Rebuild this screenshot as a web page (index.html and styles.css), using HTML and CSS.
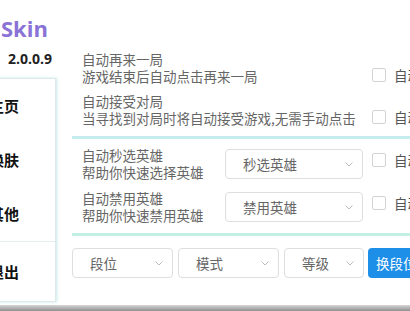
FILE: index.html
```html
<!DOCTYPE html>
<html lang="zh-CN">
<head>
    <meta charset="UTF-8">
    <meta name="viewport" content="width=device-width, initial-scale=1.0">
    <title>Skin</title>
    <link rel="stylesheet" href="styles.css">
</head>
<body>
    <div class="window">
        <div class="side">
            <div class="brand">Skin</div>
            <div class="version">2.0.0.9</div>
            <div class="nav">
                <div class="navItem">主页</div>
                <div class="navItem">换肤</div>
                <div class="navItem">其他</div>
                <div class="navItem navLast">退出</div>
            </div>
        </div>

        <div class="main">
            <div class="group groupTop">
                <div class="row">
                    <div class="desc wide">
                        <div class="title">自动再来一局</div>
                        <div class="sub">游戏结束后自动点击再来一局</div>
                    </div>
                    <label class="check"><span class="box"></span>自动再来一局</label>
                </div>
                <div class="row">
                    <div class="desc wide">
                        <div class="title">自动接受对局</div>
                        <div class="sub">当寻找到对局时将自动接受游戏,无需手动点击</div>
                    </div>
                    <label class="check"><span class="box"></span>自动接受对局</label>
                </div>
            </div>
            <div class="divider"></div>

            <div class="group groupMid">
                <div class="row">
                    <div class="desc">
                        <div class="title">自动秒选英雄</div>
                        <div class="sub">帮助你快速选择英雄</div>
                    </div>
                    <div class="select heroSelect">秒选英雄
                        <svg class="arrow" width="8" height="5" viewBox="0 0 8 5"><polyline points="0.5,0.5 4,4 7.5,0.5" fill="none" stroke="#bbb" stroke-width="1"/></svg>
                    </div>
                    <label class="check"><span class="box"></span>自动秒选</label>
                </div>
                <div class="row">
                    <div class="desc">
                        <div class="title">自动禁用英雄</div>
                        <div class="sub">帮助你快速禁用英雄</div>
                    </div>
                    <div class="select heroSelect">禁用英雄
                        <svg class="arrow" width="8" height="5" viewBox="0 0 8 5"><polyline points="0.5,0.5 4,4 7.5,0.5" fill="none" stroke="#bbb" stroke-width="1"/></svg>
                    </div>
                    <label class="check"><span class="box"></span>自动禁用</label>
                </div>
            </div>
            <div class="divider divider2"></div>

            <div class="rankRow">
                <div class="select rankSelect">段位
                    <svg class="arrow" width="8" height="5" viewBox="0 0 8 5"><polyline points="0.5,0.5 4,4 7.5,0.5" fill="none" stroke="#bbb" stroke-width="1"/></svg>
                </div>
                <div class="select rankSelect">模式
                    <svg class="arrow" width="8" height="5" viewBox="0 0 8 5"><polyline points="0.5,0.5 4,4 7.5,0.5" fill="none" stroke="#bbb" stroke-width="1"/></svg>
                </div>
                <div class="select levelSelect">等级
                    <svg class="arrow" width="8" height="5" viewBox="0 0 8 5"><polyline points="0.5,0.5 4,4 7.5,0.5" fill="none" stroke="#bbb" stroke-width="1"/></svg>
                </div>
                <button class="btnRank">换段位</button>
            </div>
        </div>
    </div>
    <div class="bottomBar"></div>
</body>
</html>
```

FILE: styles.css
```css
*{
    box-sizing: border-box;
}
body{
    margin: 0;
    width: 410px;
    height: 311px;
    overflow: hidden;
    background: #fff;
    font-family: "Noto Sans CJK SC", "Microsoft YaHei", sans-serif;
    color: #666;
}
.window{
    display: flex;
    height: 305px;
}
.side{
    width: 60px;
    flex-shrink: 0;
}
.brand{
    font-family: "Open Sans", "Noto Sans", sans-serif;
    font-weight: 700;
    font-size: 22px;
    line-height: 26px;
    color: #8a72d6;
    margin: 15px 0 0 1px;
}
.version{
    font-family: "Open Sans", "Noto Sans", sans-serif;
    font-weight: 700;
    font-size: 14px;
    line-height: 18px;
    color: #222;
    margin: 9px 0 0 8px;
}
.nav{
    margin: 10px 0 0 -40px;
    width: 96px;
    height: 224px;
    background: #fff;
    border: 1px solid #dde9ea;
    box-shadow: 1px 0 3px #c9e7ea;
}
.navItem{
    height: 54px;
    line-height: 54px;
    padding-left: 28px;
    font-size: 15px;
    font-weight: 700;
    color: #111;
}
.navLast{
    height: 60px;
    line-height: 60px;
    border-top: 1px solid #e6eeee;
}
.main{
    flex: 1;
    padding: 47px 0 0 12px;
    min-width: 0;
}
.group{
    padding-left: 10px;
}
.row{
    display: flex;
    align-items: flex-start;
}
.groupTop .row{
    height: 42px;
}
.groupMid .row{
    height: 43px;
    align-items: center;
}
.desc{
    width: 143px;
    flex-shrink: 0;
    font-size: 13.5px;
    line-height: 17px;
    white-space: nowrap;
}
.desc.wide{
    width: 281px;
    padding-top: 4px;
}
.title, .sub{
    color: #666;
}
.check{
    display: flex;
    align-items: center;
    flex-shrink: 0;
    margin-left: 9px;
    font-size: 13.5px;
    color: #555;
    white-space: nowrap;
}
.groupTop .check{
    margin-top: 18px;
}
.groupMid .check{
    margin-top: -7px;
}
.box{
    width: 14px;
    height: 14px;
    border: 1px solid #d3d3d3;
    border-radius: 2px;
    background: #fff;
    margin-right: 8px;
}
.divider{
    height: 3px;
    margin-top: 5px;
    margin-bottom: 3px;
    background: #c7ecef;
}
.divider2{
    margin-top: 5px;
    background: #c4efe4;
}
.select{
    position: relative;
    height: 30px;
    line-height: 28px;
    border: 1px solid #dedede;
    border-radius: 4px;
    background: #fff;
    font-size: 13.5px;
    color: #666;
    padding-left: 17px;
    flex-shrink: 0;
}
.heroSelect{
    width: 138px;
}
.arrow{
    position: absolute;
    right: 9px;
    top: 12px;
}
.rankRow{
    display: flex;
    gap: 5px;
    margin-top: 12px;
}
.rankSelect{
    width: 101px;
}
.levelSelect{
    width: 80px;
}
.btnRank{
    flex-shrink: 0;
    width: 80px;
    height: 30px;
    margin-left: -1px;
    border: none;
    border-radius: 4px;
    background: #1e8fe8;
    color: #fff;
    font-family: "Noto Sans CJK SC", sans-serif;
    font-size: 13.5px;
    text-align: left;
    padding-left: 8px;
}
.bottomBar{
    height: 6px;
    background: linear-gradient(#d6d6d6, #8f8f8f);
}
```
